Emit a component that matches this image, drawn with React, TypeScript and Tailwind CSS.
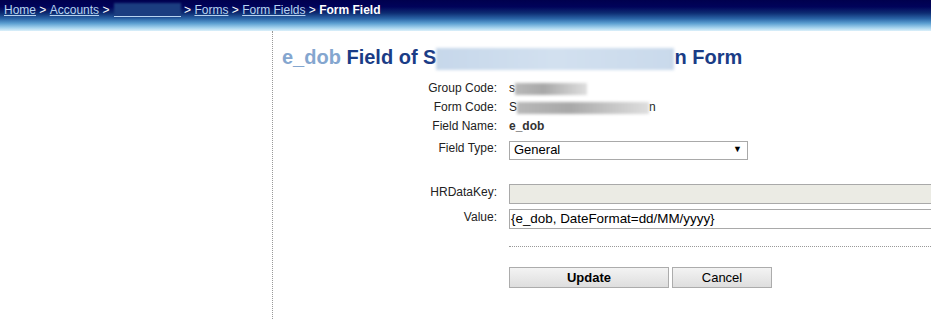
import React from 'react';

const Blur: React.FC<{ w: number; tone?: 'gray' | 'blue' }> = ({ w, tone = 'gray' }) => {
  const cls =
    tone === 'gray'
      ? 'bg-[linear-gradient(90deg,#b8b8b8,#a8a8a8_40%,#c4c4c4_70%,#dedede)]'
      : 'bg-[linear-gradient(90deg,#c6d7ea,#d2e0ef_50%,#c9d9eb)]';
  return <span className={`inline-block align-middle blur-[1.5px] ${cls}`} style={{ width: w, height: tone === 'blue' ? 22 : 12 }} />;
};

const Row: React.FC<{ label: string; children: React.ReactNode; labelClass?: string; rowClass?: string }> = ({
  label,
  children,
  labelClass = 'leading-[19px]',
  rowClass = '',
}) => (
  <div className={`flex ${rowClass}`}>
    <div className={`w-[224px] shrink-0 text-right text-[12px] text-[#222] ${labelClass}`}>{label}</div>
    <div className="pl-[12px] text-[12px] text-[#222]">{children}</div>
  </div>
);

const Sep = () => <span className="whitespace-pre"> &gt; </span>;

export default function App() {
  return (
    <div className="w-[931px] h-[319px] overflow-hidden bg-white font-['Liberation_Sans',Arial,sans-serif]">
      {/* Header / breadcrumb */}
      <div className="h-[31px] bg-[linear-gradient(180deg,#00004e_0%,#00035a_22%,#0d2c72_42%,#2a64a6_60%,#5a9ed0_75%,#a6d4ee_90%,#dcf0fa_100%)] pl-[4px] pt-[3px]">
        <div className="flex items-center text-[12px] leading-[15px] text-white">
          <a className="text-[#b7d3f0] underline">Home</a>
          <Sep />
          <a className="text-[#b7d3f0] underline">Accounts</a>
          <Sep />
          <span className="relative inline-block w-[68px] h-[15px]">
            <span className="absolute left-[1px] right-0 top-0 h-[14px] bg-[#1b3d80] blur-[1px]" />
            <span className="absolute left-[1px] right-0 bottom-[1px] h-px bg-[#b7d3f0]" />
          </span>
          <Sep />
          <a className="text-[#b7d3f0] underline">Forms</a>
          <Sep />
          <a className="text-[#b7d3f0] underline">Form Fields</a>
          <Sep />
          <span className="font-bold">Form Field</span>
        </div>
      </div>

      <div className="flex h-[288px]">
        <div className="w-[273px] shrink-0 border-r border-dotted border-[#999]" />
        <div className="flex-1">
          <h1 className="mt-[14px] pl-[9px] text-[20px] leading-[24px] font-bold text-[#1a3c86] whitespace-nowrap">
            <span className="text-[#84a6cf]">e_dob</span> Field of S
            <Blur w={238} tone="blue" />n Form
          </h1>

          <div className="mt-[9px]">
            <Row label="Group Code:">
              s<Blur w={72} />
            </Row>
            <Row label="Form Code:">
              S<Blur w={132} />n
            </Row>
            <Row label="Field Name:">
              <span className="font-bold text-[#333]">e_dob</span>
            </Row>
            <Row label="Field Type:" labelClass="leading-[19px] pt-[3px]">
              <div className="mt-[5px] w-[239px] h-[19px] border border-[#a9a9a9] bg-white flex items-center justify-between pl-[4px] pr-[5px] text-[13px] text-black">
                <span>General</span>
                <span className="text-[9px]">▼</span>
              </div>
            </Row>

            <Row label="HRDataKey:" labelClass="leading-[16px]" rowClass="mt-[24px]">
              <div className="w-[500px] h-[20px] border border-[#a9a9a9] bg-[#ebebe4]" />
            </Row>
            <Row label="Value:" labelClass="leading-[16px]" rowClass="mt-[5px]">
              <div className="w-[500px] h-[20px] border border-[#a9a9a9] bg-white pl-[1px] text-[13.4px] leading-[18px] text-black">
                {'{e_dob, DateFormat=dd/MM/yyyy}'}
              </div>
            </Row>
            <Row label="">
              <div className="mt-[17px] w-[500px] border-t border-dotted border-[#999]" />
              <div className="mt-[20px] flex gap-[3px]">
                <button className="w-[160px] h-[21px] border border-[#acacac] bg-[linear-gradient(180deg,#f3f3f3,#dedede)] text-[13px] font-bold text-black">
                  Update
                </button>
                <button className="w-[100px] h-[21px] border border-[#acacac] bg-[linear-gradient(180deg,#f3f3f3,#dedede)] text-[13px] text-black">
                  Cancel
                </button>
              </div>
            </Row>
          </div>
        </div>
      </div>
    </div>
  );
}
